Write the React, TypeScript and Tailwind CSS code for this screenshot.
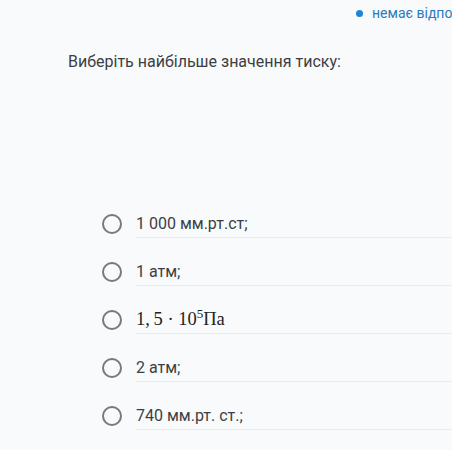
import React from "react";

const options: { key: string; content: React.ReactNode }[] = [
  { key: "a", content: "1 000 мм.рт.ст;" },
  { key: "b", content: "1 атм;" },
  {
    key: "c",
    content: (
      <span className="font-['Liberation_Serif',serif] text-[18.5px] text-[#222] whitespace-nowrap">
        1,&thinsp;5 · 10
        <span className="text-[13px] relative -top-[7px]">5</span>
        Па
      </span>
    ),
  },
  { key: "d", content: "2 атм;" },
  { key: "e", content: "740 мм.рт. ст.;" },
];

export default function App() {
  return (
    <div className="w-[452px] h-[450px] overflow-hidden bg-[#f9fafc] font-['Roboto',sans-serif] relative">
      <div className="flex justify-end items-center h-[27px]">
        <div className="flex items-center gap-[9px] w-[96px] whitespace-nowrap overflow-hidden">
          <span className="w-[7px] h-[7px] rounded-full bg-[#1a86d8] shrink-0" />
          <span className="text-[14px] text-[#2a7bbf]">немає відповіді</span>
        </div>
      </div>
      <div className="pl-[68px] pt-[23px] text-[16px] text-[#3b3f44]">
        Виберіть найбільше значення тиску:
      </div>
      <div className="mt-[126px] pl-[102px] flex flex-col">
        {options.map((o) => (
          <div key={o.key} className="flex items-center h-[48px]">
            <span className="w-[20px] h-[20px] rounded-full border-2 border-[#737b80] shrink-0" />
            <div className="ml-[14px] flex-1 h-[27px] flex items-center border-b border-[#e9ecef]">
              <span className="text-[16px] text-[#3b3f44]">{o.content}</span>
            </div>
          </div>
        ))}
      </div>
    </div>
  );
}
